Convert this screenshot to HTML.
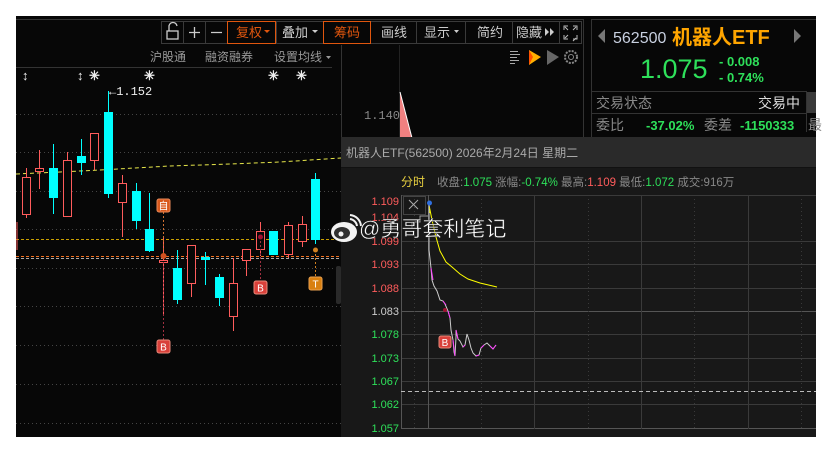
<!DOCTYPE html>
<html><head><meta charset="utf-8"><style>
html,body{margin:0;padding:0;background:#fff;width:832px;height:453px;overflow:hidden}
svg{display:block}
text{font-family:"Liberation Sans","Noto Sans CJK SC",sans-serif}
.m{font-family:"Liberation Mono","Noto Sans CJK SC",monospace}
</style></head><body>
<svg width="832" height="453" viewBox="0 0 832 453" xmlns="http://www.w3.org/2000/svg">
<rect x="0" y="0" width="832" height="453" fill="#fff"/>
<rect x="16" y="16" width="800" height="421" fill="#070707"/>
<!-- toolbar -->
<line x1="16" y1="19.5" x2="583" y2="19.5" stroke="#333"/>
<g fill="none" stroke="#3a3a3a">
<rect x="161.5" y="21.5" width="22" height="22"/><rect x="183.5" y="21.5" width="22" height="22"/><rect x="205.5" y="21.5" width="22" height="22"/>
<rect x="276.5" y="21.5" width="47" height="22"/><rect x="370.5" y="21.5" width="46" height="22"/><rect x="416.5" y="21.5" width="49" height="22"/><rect x="465.5" y="21.5" width="47" height="22"/><rect x="512.5" y="21.5" width="47" height="22"/><rect x="559.5" y="21.5" width="22" height="22"/>
</g>
<rect x="227.5" y="21.5" width="48" height="22" fill="none" stroke="#e0560e"/>
<rect x="323.5" y="21.5" width="47" height="22" fill="none" stroke="#e0560e"/>
<g stroke="#ccc" fill="none" stroke-width="1.3"><rect x="167" y="31" width="11" height="8"/><path d="M169 31v-4a4 4 0 0 1 8 -1"/><path d="M189 32.5h11M194.5 27v11M211 32.5h11"/></g>
<g font-size="13" fill="#ccc"><text x="236" y="37" fill="#e0560e">复权</text><text x="282" y="37">叠加</text><text x="334" y="37" fill="#e0560e">筹码</text><text x="381" y="37">画线</text><text x="424" y="37">显示</text><text x="477" y="37">简约</text><text x="516" y="37">隐藏</text></g>
<g fill="#ccc"><path d="M264 30h6l-3 3z" fill="#e0560e"/><path d="M312 30h6l-3 3z"/><path d="M454 30h5l-2.5 3z"/><path d="M545 28v8l4-4zM550 28v8l4-4z"/></g>
<g stroke="#bbb" fill="none"><path d="M564 30v-4h4M577 30v-4h-4M564 35v4h4M577 35v4h-4M565 27l3 3M576 27l-3 3M565 38l3-3M576 38l-3 3"/></g>
<g font-size="12" fill="#999"><text x="150" y="61">沪股通</text><text x="205" y="61">融资融券</text><text x="274" y="61">设置均线</text></g>
<path d="M326 56h5l-2.5 3z" fill="#999"/>
<line x1="16" y1="67.5" x2="332" y2="67.5" stroke="#333"/>
<line x1="341.5" y1="45" x2="341.5" y2="140" stroke="#333"/>
<line x1="399.5" y1="45" x2="399.5" y2="140" stroke="#222"/>
<line x1="583.5" y1="19" x2="583.5" y2="140" stroke="#333"/>
<!-- markers row -->
<g fill="#eee" font-size="13" font-weight="bold"><text x="22" y="80">↕</text><text x="77" y="80">↕</text><text x="89" y="80">✳</text><text x="144" y="80">✳</text><text x="268" y="80">✳</text><text x="296" y="80">✳</text></g>
<text x="109" y="95" fill="#eee" font-size="12" class="m">←1.152</text>
<!-- grid dotted -->
<g stroke="#444" stroke-dasharray="1 3">
<line x1="16" y1="114.5" x2="341" y2="114.5"/><line x1="16" y1="152.5" x2="341" y2="152.5"/><line x1="16" y1="191.5" x2="341" y2="191.5"/><line x1="16" y1="229.5" x2="341" y2="229.5"/><line x1="16" y1="268.5" x2="341" y2="268.5"/><line x1="16" y1="306.5" x2="341" y2="306.5"/><line x1="16" y1="345.5" x2="341" y2="345.5"/><line x1="16" y1="384.5" x2="341" y2="384.5"/><line x1="16" y1="423.5" x2="341" y2="423.5"/>
</g>
<text x="364" y="119" fill="#888" font-size="12" class="m">1.140</text>
<path d="M400 92 L400 138 L412 138 Z" fill="#f08080"/><path d="M400 92 L412 138" stroke="#fff"/>
<polyline points="16,174 60,172 100,170 170,166 230,164 280,162 341,158" fill="none" stroke="#e6e64a" stroke-dasharray="4 3"/>
<line x1="16" y1="239.5" x2="341" y2="239.5" stroke="#c9a000" stroke-dasharray="3 2"/>
<line x1="16" y1="256.5" x2="341" y2="256.5" stroke="#f07020" stroke-dasharray="3 2"/>
<line x1="16" y1="258.5" x2="341" y2="258.5" stroke="#aaa" stroke-dasharray="3 2"/>
<!-- candles -->
<g stroke="#ff5c5c" fill="#070707">
<line x1="17" y1="222" x2="17" y2="250"/>
<line x1="26.5" y1="168" x2="26.5" y2="218"/><rect x="22.5" y="177.5" width="8" height="37"/>
<line x1="39.5" y1="150" x2="39.5" y2="189"/><rect x="35.5" y="168.5" width="8" height="3"/>
<line x1="67.5" y1="152" x2="67.5" y2="216"/><rect x="63.5" y="160.5" width="8" height="56"/>
<line x1="94.5" y1="133" x2="94.5" y2="170"/><rect x="90.5" y="133.5" width="8" height="27"/>
<line x1="122.5" y1="175" x2="122.5" y2="237"/><rect x="118.5" y="183.5" width="8" height="19"/>
<line x1="163.5" y1="237" x2="163.5" y2="314"/><rect x="159.5" y="260.5" width="8" height="2"/>
<line x1="191.5" y1="245" x2="191.5" y2="297"/><rect x="187.5" y="245.5" width="8" height="38"/>
<line x1="233.5" y1="258" x2="233.5" y2="331"/><rect x="229.5" y="283.5" width="8" height="33"/>
<line x1="246.5" y1="249" x2="246.5" y2="276"/><rect x="242.5" y="249.5" width="8" height="11"/>
<line x1="260.5" y1="222" x2="260.5" y2="256"/><rect x="256.5" y="231.5" width="8" height="18"/>
<line x1="288.5" y1="222" x2="288.5" y2="258"/><rect x="284.5" y="225.5" width="8" height="29"/>
<line x1="302.5" y1="216" x2="302.5" y2="247"/><rect x="298.5" y="224.5" width="8" height="17"/>
</g>
<g stroke="#00ffff" fill="#00ffff">
<line x1="53.5" y1="144" x2="53.5" y2="214"/><rect x="49.5" y="168.5" width="8" height="29"/>
<line x1="81.5" y1="139" x2="81.5" y2="175"/><rect x="77.5" y="156.5" width="8" height="6"/>
<line x1="108.5" y1="91" x2="108.5" y2="198"/><rect x="104.5" y="112.5" width="8" height="81"/>
<line x1="136.5" y1="183" x2="136.5" y2="229"/><rect x="132.5" y="191.5" width="8" height="29"/>
<line x1="149.5" y1="193" x2="149.5" y2="252"/><rect x="145.5" y="229.5" width="8" height="21"/>
<line x1="177.5" y1="250" x2="177.5" y2="304"/><rect x="173.5" y="268.5" width="8" height="31"/>
<line x1="205.5" y1="252" x2="205.5" y2="285"/><rect x="201.5" y="257.5" width="8" height="2"/>
<line x1="219.5" y1="274" x2="219.5" y2="306"/><rect x="215.5" y="277.5" width="8" height="20"/>
<rect x="269.5" y="231.5" width="8" height="23"/>
<line x1="315.5" y1="173" x2="315.5" y2="244"/><rect x="311.5" y="179.5" width="8" height="60"/>
</g>
<!-- signals -->
<g stroke-dasharray="2 2"><line x1="163.5" y1="212" x2="163.5" y2="260" stroke="#d07030"/><line x1="163.5" y1="262" x2="163.5" y2="340" stroke="#a03040"/><line x1="260.5" y1="237" x2="260.5" y2="281" stroke="#a03040"/><line x1="315.5" y1="250" x2="315.5" y2="277" stroke="#d08020"/></g>
<circle cx="163.5" cy="256" r="3" fill="#d05020"/><circle cx="260.5" cy="237" r="2.5" fill="#a01030"/><circle cx="315.5" cy="250" r="2.5" fill="#d08020"/>
<g font-size="10" text-anchor="middle" fill="#fff">
<rect x="157" y="199" width="13" height="13" rx="2" fill="#d9581c" stroke="#e98a5a"/><text x="163.5" y="209.5">自</text>
<rect x="157" y="340" width="13" height="13" rx="2" fill="#d9403a" stroke="#e98a7a"/><text x="163.5" y="350.5">B</text>
<rect x="254" y="281" width="13" height="13" rx="2" fill="#d9403a" stroke="#e98a7a"/><text x="260.5" y="291.5">B</text>
<rect x="309" y="277" width="13" height="13" rx="2" fill="#d98010" stroke="#e9a050"/><text x="315.5" y="287.5">T</text>
</g>
<rect x="336" y="266" width="5" height="38" fill="#2a2a2a" rx="2"/>
<!-- chip icons -->
<g stroke="#aaa"><path d="M510 51.5h8M510 54.5h10M510 57.5h7M510 60.5h9M510 63.5h5"/></g>
<path d="M529 50 L541 57 L529 65 Z" fill="#ffb000"/><path d="M529 50 L533 57 L529 65 Z" fill="#ff5000"/>
<path d="M547 50 L559 57 L547 65 Z" fill="#666"/>
<circle cx="571" cy="57" r="6" fill="none" stroke="#888" stroke-width="2" stroke-dasharray="2 1.2"/><circle cx="571" cy="57" r="2.5" fill="none" stroke="#888"/>
<!-- right panel -->
<path d="M591.5 137V19.5H816" fill="none" stroke="#333"/>
<line x1="591" y1="91.5" x2="806" y2="91.5" stroke="#333"/><line x1="591" y1="113.5" x2="806" y2="113.5" stroke="#333"/><line x1="806.5" y1="91" x2="806.5" y2="132" stroke="#333"/>
<rect x="807" y="92" width="9" height="21" fill="#3a3a3a"/>
<path d="M605 29v14l-7-7z" fill="#777"/><path d="M794 29v14l7-7z" fill="#777"/>
<text x="613" y="43" fill="#c8d0e0" font-size="16">562500</text>
<text x="672" y="44" fill="#ffa500" font-size="20" font-weight="bold">机器人ETF</text>
<text x="640" y="78" fill="#2ee05a" font-size="27">1.075</text>
<text x="719" y="66" fill="#2ee05a" font-size="13" font-weight="bold">- 0.008</text>
<text x="719" y="82" fill="#2ee05a" font-size="13" font-weight="bold">- 0.74%</text>
<text x="596" y="108" fill="#888" font-size="14">交易状态</text>
<text x="800" y="108" fill="#ddd" font-size="14" text-anchor="end">交易中</text>
<text x="596" y="130" fill="#888" font-size="14">委比</text>
<text x="646" y="130" fill="#2ee05a" font-size="13" font-weight="bold">-37.02%</text>
<text x="704" y="130" fill="#888" font-size="14">委差</text>
<text x="740" y="130" fill="#2ee05a" font-size="13" font-weight="bold">-1150333</text>
<text x="808" y="130" fill="#888" font-size="14">最</text>
<!-- popup -->
<rect x="341" y="137" width="475" height="300" fill="#181818"/>
<rect x="341" y="137" width="475" height="30" fill="#2a2a2a"/>
<line x1="341" y1="167.5" x2="816" y2="167.5" stroke="#111"/>
<text x="346" y="157" fill="#aaa" font-size="12">机器人ETF(562500) 2026年2月24日 星期二</text>
<g font-size="11.5"><text x="401" y="186" fill="#e8d040" font-size="12">分时</text>
<text x="437" y="186" fill="#888">收盘:<tspan fill="#2ee05a">1.075</tspan> 涨幅:<tspan fill="#2ee05a">-0.74%</tspan> 最高:<tspan fill="#ff5c5c">1.109</tspan> 最低:<tspan fill="#2ee05a">1.072</tspan> 成交:916万</text></g>
<g stroke="#3a3a3a">
<line x1="401" y1="195.5" x2="816" y2="195.5"/><line x1="401" y1="241.5" x2="816" y2="241.5"/><line x1="401" y1="264.5" x2="816" y2="264.5"/><line x1="401" y1="288.5" x2="816" y2="288.5"/><line x1="401" y1="311.5" x2="816" y2="311.5" stroke="#555"/><line x1="401" y1="334.5" x2="816" y2="334.5"/><line x1="401" y1="358.5" x2="816" y2="358.5"/><line x1="401" y1="381.5" x2="816" y2="381.5"/><line x1="401" y1="404.5" x2="816" y2="404.5"/><line x1="401" y1="428.5" x2="816" y2="428.5" stroke="#555"/>
<line x1="401.5" y1="195" x2="401.5" y2="429" stroke="#555"/><line x1="428.5" y1="195" x2="428.5" y2="429" stroke="#555"/>
<line x1="534.5" y1="195" x2="534.5" y2="429"/><line x1="641.5" y1="195" x2="641.5" y2="429"/><line x1="748.5" y1="195" x2="748.5" y2="429"/>
</g>
<g stroke="#3a3a3a" stroke-dasharray="1 3"><line x1="414.5" y1="195" x2="414.5" y2="429"/><line x1="481.5" y1="195" x2="481.5" y2="429"/><line x1="588.5" y1="195" x2="588.5" y2="429"/><line x1="694.5" y1="195" x2="694.5" y2="429"/><line x1="801.5" y1="195" x2="801.5" y2="429"/></g>
<line x1="401" y1="391.5" x2="816" y2="391.5" stroke="#bbb" stroke-dasharray="4 3"/>
<g font-size="11" text-anchor="end" class="m">
<text x="399" y="205" fill="#ff5c5c">1.109</text><text x="399" y="221" fill="#ff5c5c">1.104</text><text x="399" y="245" fill="#ff5c5c">1.099</text><text x="399" y="268" fill="#ff5c5c">1.093</text><text x="399" y="292" fill="#ff5c5c">1.088</text><text x="399" y="315" fill="#ccc">1.083</text><text x="399" y="338" fill="#2ee05a">1.078</text><text x="399" y="362" fill="#2ee05a">1.073</text><text x="399" y="385" fill="#2ee05a">1.067</text><text x="399" y="408" fill="#2ee05a">1.062</text><text x="399" y="432" fill="#2ee05a">1.057</text>
</g>
<rect x="403.5" y="196.5" width="22" height="18" fill="none" stroke="#444"/><path d="M409 200l9 9M418 200l-9 9" stroke="#aaa"/>
<path d="M404 228h8v-6h8v-6h8" stroke="#999" fill="none"/>
<polyline points="429,205 432,220 436,237 440,251 446,262 452,267 460,274 468,279 480,283 497,287" fill="none" stroke="#ffff00"/>
<polyline points="429,205 429,250 431,268 432,280 434,286 437,291 440,300 443,301 445,304 448,311 450,318 451,330 453,340 454,352 455,356 456,337 456,330 458,339 460,341 463,347 465,345 467,334 469,340 471,348 473,353 476,356 479,355 481,348 484,345 487,343 490,346 493,349 496,345" fill="none" stroke="#ccc"/>
<g stroke="#ff40ff" fill="none"><path d="M431 268l2 12M443 301l3 4M448 311l2 7M453 340l2 16M456 330l2 9M463 347l2-2M476 356l3-1M481 348l3-3M490 346l3 3l3-4"/></g>
<line x1="429.5" y1="203" x2="429.5" y2="215" stroke="#e0e040" stroke-dasharray="2 2"/>
<circle cx="429.5" cy="203" r="2.5" fill="#3070e0"/>
<circle cx="445" cy="310" r="2" fill="#a01030"/>
<rect x="439" y="336" width="12" height="12" rx="2" fill="#d9403a" stroke="#e98a7a"/><text x="445" y="346" fill="#fff" font-size="10" text-anchor="middle">B</text>
<!-- watermark -->
<g opacity="0.95">
<ellipse cx="344" cy="232" rx="13" ry="10" fill="#fff"/>
<ellipse cx="342" cy="233" rx="8" ry="6" fill="#333"/><circle cx="341" cy="234" r="2.5" fill="#fff"/>
<path d="M350 219a8 8 0 0 1 7 7M350 215a12 12 0 0 1 11 11" stroke="#fff" stroke-width="2" fill="none"/>
</g>
<text x="359" y="236" fill="#fff" font-size="21" stroke="#222" stroke-width="0.4">@勇哥套利笔记</text>
</svg>
</body></html>
